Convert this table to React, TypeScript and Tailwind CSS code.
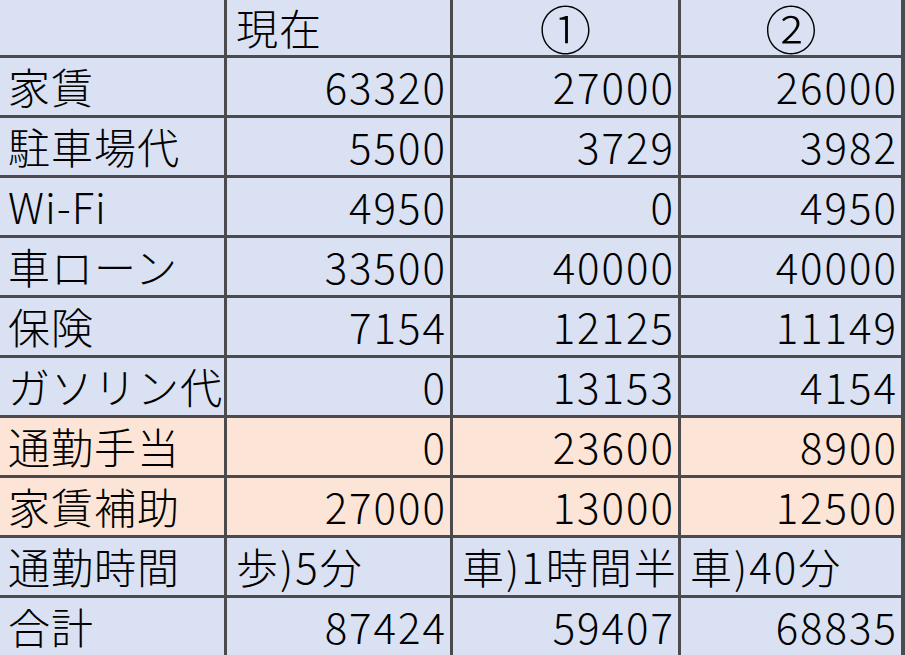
import React from "react";

type Row = { label: string; v: [string, string, string]; tone: "blue" | "orange"; align?: "left" | "right" };

const rows: Row[] = [
  { label: "家賃", v: ["63320", "27000", "26000"], tone: "blue" },
  { label: "駐車場代", v: ["5500", "3729", "3982"], tone: "blue" },
  { label: "Wi-Fi", v: ["4950", "0", "4950"], tone: "blue" },
  { label: "車ローン", v: ["33500", "40000", "40000"], tone: "blue" },
  { label: "保険", v: ["7154", "12125", "11149"], tone: "blue" },
  { label: "ガソリン代", v: ["0", "13153", "4154"], tone: "blue" },
  { label: "通勤手当", v: ["0", "23600", "8900"], tone: "orange" },
  { label: "家賃補助", v: ["27000", "13000", "12500"], tone: "orange" },
  { label: "通勤時間", v: ["歩)5分", "車)1時間半", "車)40分"], tone: "blue", align: "left" },
  { label: "合計", v: ["87424", "59407", "68835"], tone: "blue" },
];

export default function App() {
  return (
    <div
      className="w-[905px] h-[655px] overflow-hidden bg-[#4b4b4d] pr-[4px] text-black"
      style={{ fontFamily: '"Noto Sans CJK JP", sans-serif' }}
    >
      <div className="grid grid-cols-[224px_223px_225px_220px] grid-rows-[55px_repeat(10,57px)] gap-[3px] text-[42px] font-light leading-tight">
        <div className="bg-[#d9e1f2]" />
        <div className="bg-[#d9e1f2] flex items-center pl-[9px] tracking-[1px]">現在</div>
        <div className="bg-[#d9e1f2] flex items-center justify-center text-[52px] leading-none">①</div>
        <div className="bg-[#d9e1f2] flex items-center justify-center text-[52px] leading-none">②</div>
        {rows.map((r) => {
          const bg = r.tone === "orange" ? "bg-[#fce4d6]" : "bg-[#d9e1f2]";
          return (
            <React.Fragment key={r.label}>
              <div className={`${bg} flex items-center pl-[8px] whitespace-nowrap tracking-[1px]`}>{r.label}</div>
              {r.v.map((val, i) => (
                <div
                  key={i}
                  className={`${bg} flex items-center whitespace-nowrap tracking-[2px] ${
                    r.align === "left" ? "justify-start pl-[9px]" : "justify-end pr-[3px]"
                  }`}
                >
                  {val}
                </div>
              ))}
            </React.Fragment>
          );
        })}
      </div>
    </div>
  );
}
